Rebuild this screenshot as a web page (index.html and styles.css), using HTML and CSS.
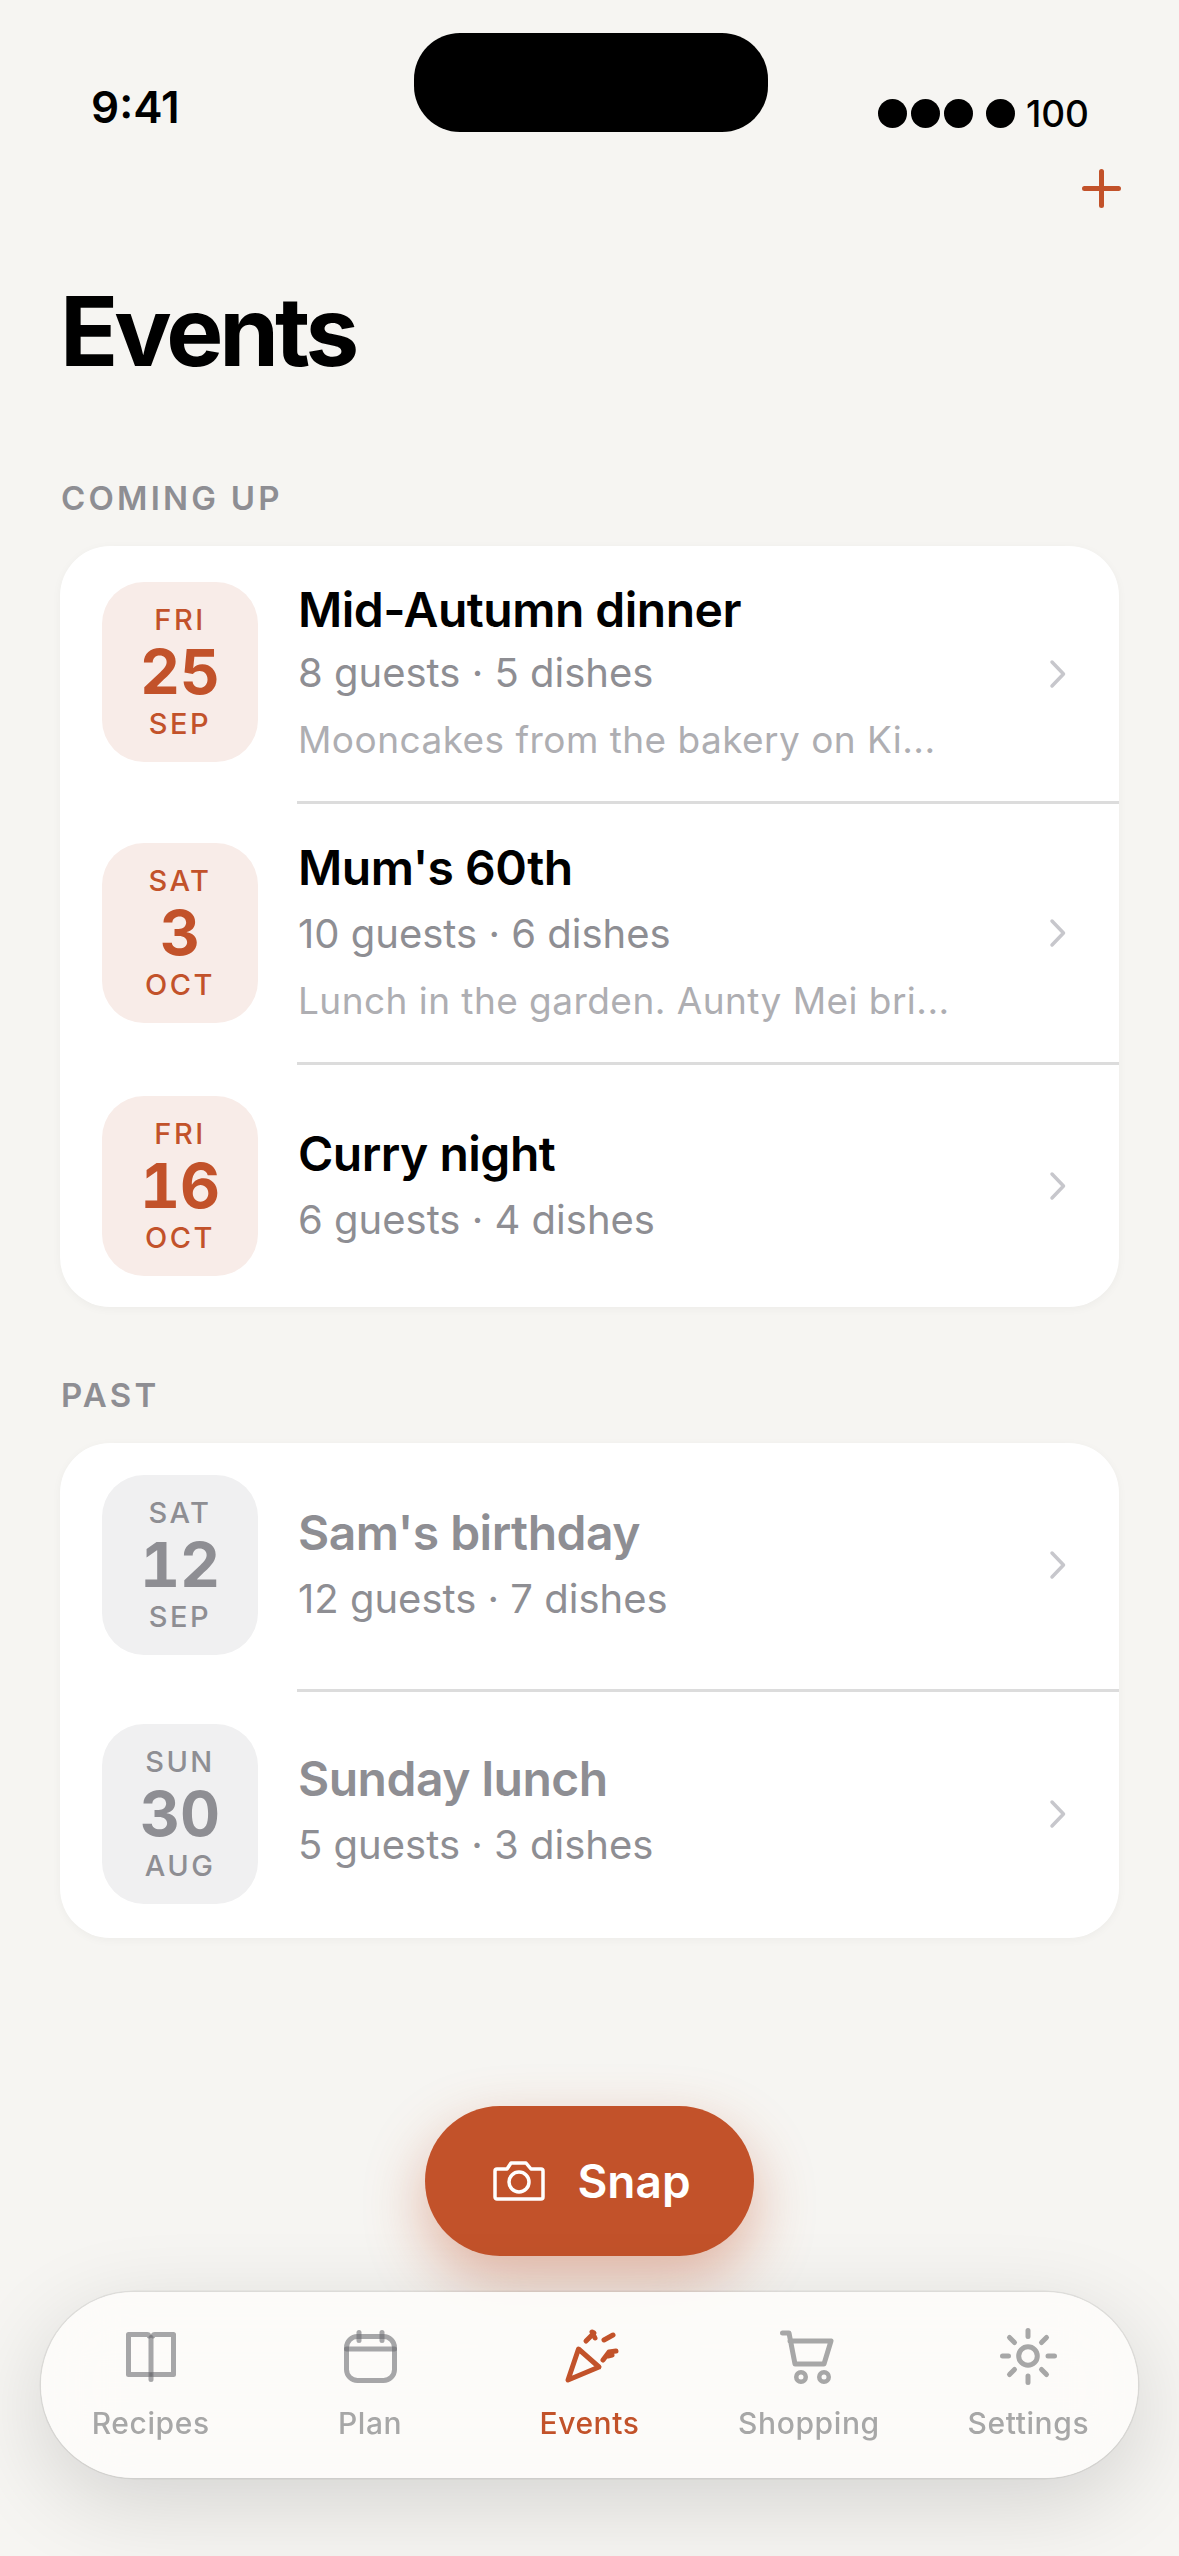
FILE: index.html
```html
<!DOCTYPE html>
<html lang="en">
<head>
  <meta charset="UTF-8">
  <meta name="viewport" content="width=device-width, initial-scale=1.0">
  <title>Events</title>
  <link rel="stylesheet" href="styles.css">
</head>
<body>
  <div class="phone">
    <div class="status-bar">
      <span class="time">9:41</span>
      <div class="island"></div>
      <div class="status-right">
        <span class="dot"></span><span class="dot"></span><span class="dot"></span><span class="dot dot-wifi"></span>
        <span class="battery">100</span>
      </div>
    </div>

    <div class="top-actions">
      <svg class="plus" width="39" height="39" viewBox="0 0 39 39"><path d="M19.5 2.5v34M2.5 19.5h34" fill="none" stroke="#c2522a" stroke-width="5" stroke-linecap="round"/></svg>
    </div>

    <h1 class="page-title">Events</h1>

    <h2 class="section-label">COMING UP</h2>
    <div class="card">
      <div class="row row-tight">
        <div class="date-box">
          <span class="date-dow">FRI</span><span class="date-day">25</span><span class="date-mon">SEP</span>
        </div>
        <div class="row-text">
          <div class="row-title">Mid-Autumn dinner</div>
          <div class="row-meta">8 guests · 5 dishes</div>
          <div class="row-note">Mooncakes from the bakery on Ki...</div>
        </div>
        <svg class="chevron" width="18" height="30" viewBox="0 0 18 30"><path d="M3 3l11.5 12L3 27" fill="none" stroke="#c7c7cc" stroke-width="3.5" stroke-linecap="round" stroke-linejoin="round"/></svg>
      </div>
      <div class="row">
        <div class="date-box">
          <span class="date-dow">SAT</span><span class="date-day">3</span><span class="date-mon">OCT</span>
        </div>
        <div class="row-text">
          <div class="row-title">Mum's 60th</div>
          <div class="row-meta">10 guests · 6 dishes</div>
          <div class="row-note">Lunch in the garden. Aunty Mei bri...</div>
        </div>
        <svg class="chevron" width="18" height="30" viewBox="0 0 18 30"><path d="M3 3l11.5 12L3 27" fill="none" stroke="#c7c7cc" stroke-width="3.5" stroke-linecap="round" stroke-linejoin="round"/></svg>
      </div>
      <div class="row">
        <div class="date-box">
          <span class="date-dow">FRI</span><span class="date-day">16</span><span class="date-mon">OCT</span>
        </div>
        <div class="row-text">
          <div class="row-title">Curry night</div>
          <div class="row-meta">6 guests · 4 dishes</div>
        </div>
        <svg class="chevron" width="18" height="30" viewBox="0 0 18 30"><path d="M3 3l11.5 12L3 27" fill="none" stroke="#c7c7cc" stroke-width="3.5" stroke-linecap="round" stroke-linejoin="round"/></svg>
      </div>
    </div>

    <h2 class="section-label section-past">PAST</h2>
    <div class="card">
      <div class="row row-past">
        <div class="date-box">
          <span class="date-dow">SAT</span><span class="date-day">12</span><span class="date-mon">SEP</span>
        </div>
        <div class="row-text">
          <div class="row-title">Sam's birthday</div>
          <div class="row-meta">12 guests · 7 dishes</div>
        </div>
        <svg class="chevron" width="18" height="30" viewBox="0 0 18 30"><path d="M3 3l11.5 12L3 27" fill="none" stroke="#c7c7cc" stroke-width="3.5" stroke-linecap="round" stroke-linejoin="round"/></svg>
      </div>
      <div class="row row-past">
        <div class="date-box">
          <span class="date-dow">SUN</span><span class="date-day">30</span><span class="date-mon">AUG</span>
        </div>
        <div class="row-text">
          <div class="row-title">Sunday lunch</div>
          <div class="row-meta">5 guests · 3 dishes</div>
        </div>
        <svg class="chevron" width="18" height="30" viewBox="0 0 18 30"><path d="M3 3l11.5 12L3 27" fill="none" stroke="#c7c7cc" stroke-width="3.5" stroke-linecap="round" stroke-linejoin="round"/></svg>
      </div>
    </div>

    <button class="snap">
      <svg width="52" height="40" viewBox="0 0 52 40" fill="none" stroke="#fff" stroke-width="3.5" stroke-linejoin="round"><path d="M4 8h10l4-6h15l5 6h10a2 2 0 0 1 2 2v26a2 2 0 0 1-2 2H4a2 2 0 0 1-2-2V10a2 2 0 0 1 2-2z"/><circle cx="26" cy="21" r="10"/></svg>
      <span>Snap</span>
    </button>

    <nav class="tabbar">
      <div class="tab">
        <svg width="60" height="60" viewBox="0 0 60 60" fill="none" stroke="#6d6d72" stroke-width="5" stroke-opacity=".6" stroke-linecap="round" stroke-linejoin="round"><path d="M28 10a2 2 0 0 0-2-1.5H7.500v40H29"/><path d="M32 10a2 2 0 0 1 2-1.5h18.500v40H31"/><path d="M30 11.500v42"/></svg>
        <span>Recipes</span>
      </div>
      <div class="tab">
        <svg width="60" height="60" viewBox="0 0 60 60" fill="none" stroke="#6d6d72" stroke-width="5" stroke-opacity=".6" stroke-linecap="round" stroke-linejoin="round"><rect x="6.500" y="10.500" width="48" height="44" rx="11"/><path d="M6.500 23h48"/><path d="M19 6.500v8"/><path d="M42 6.500v8"/></svg>
        <span>Plan</span>
      </div>
      <div class="tab tab-active">
        <svg width="60" height="60" viewBox="0 0 60 60" fill="none" stroke="#c2522a" stroke-width="5" stroke-linecap="round" stroke-linejoin="round"><path d="M18.500 23L39 41 8 54z"/><path d="M26 15l8-8"/><path d="M32 6l3 6"/><path d="M44 14l9-5"/><path d="M43 34l6-8 7-1"/><path d="M48 30l4-1"/></svg>
        <span>Events</span>
      </div>
      <div class="tab">
        <svg width="60" height="60" viewBox="0 0 60 60" fill="none" stroke="#a7a7a7" stroke-width="5" stroke-linecap="round" stroke-linejoin="round"><path d="M3.500 7H10l6 31h29l7-23H11"/><circle cx="22" cy="51" r="4.750" stroke-width="4.500"/><circle cx="45" cy="51" r="4.750" stroke-width="4.500"/></svg>
        <span>Shopping</span>
      </div>
      <div class="tab">
        <svg width="60" height="60" viewBox="0 0 60 60" fill="none" stroke="#a7a7a7" stroke-width="5" stroke-linecap="round"><circle cx="30" cy="30" r="9.300"/><path d="M30 4.500v6M30 50v6.500M4.500 30h6M50 30h6.500M11.500 11.500l5 5M43.500 43.500l5 5M11.500 48.500l5-5M43.500 16.500l5-5"/></svg>
        <span>Settings</span>
      </div>
    </nav>
  </div>
</body>
</html>
```
FILE: styles.css
```css
* {
  box-sizing: border-box;
}

body {
  margin: 0;
  background-color: #f6f5f2;
  font-family: Inter, "Noto Sans", sans-serif;
}

.phone {
  position: relative;
  width: 1179px;
  height: 2556px;
  padding: 0 60px;
  overflow: hidden;
}

.status-bar {
  display: flex;
  justify-content: space-between;
  margin: 0 -60px;
  padding: 33px 90px 0 91px;
  height: 132px;
}

.time {
  margin-top: 49px;
  font-size: 44px;
  line-height: 50px;
  font-weight: 600;
  color: #000;
}

.island {
  position: absolute;
  left: 414px;
  top: 33px;
  width: 354px;
  height: 99px;
  border-radius: 46px;
  background-color: #000;
}

.status-right {
  display: flex;
  align-items: center;
  height: 44px;
  margin-top: 58px;
}

.dot {
  width: 29px;
  height: 29px;
  margin-right: 4px;
  border-radius: 50%;
  background-color: #000;
}

.dot-wifi {
  margin-left: 9px;
  margin-right: 11px;
}

.battery {
  font-size: 37px;
  font-weight: 500;
  color: #000;
}

.top-actions {
  display: flex;
  justify-content: flex-end;
  margin-top: 37px;
  margin-right: -2px;
}

.plus {
  display: block;
}

.page-title {
  margin: 65px 0 0 0;
  font-size: 96px;
  line-height: 116px;
  font-weight: 700;
  letter-spacing: -4px;
  color: #000;
}

.section-label {
  margin: 89px 0 0 1px;
  font-size: 33px;
  line-height: 40px;
  font-weight: 600;
  letter-spacing: 3.2px;
  color: #8e8e93;
}

.section-past {
  margin-top: 68px;
}

.card {
  margin-top: 28px;
  background-color: #fff;
  border-radius: 50px;
  box-shadow: 0 2px 10px rgba(0, 0, 0, 0.04);
}

.row {
  display: flex;
  align-items: center;
  position: relative;
  padding: 31px 42px;
}

.row + .row {
  margin-top: 3px;
}

.row + .row::before {
  content: "";
  position: absolute;
  left: 237px;
  right: 0;
  top: -3px;
  height: 3px;
  background-color: #dcdcdc;
}

.date-box {
  flex: none;
  display: flex;
  flex-direction: column;
  align-items: center;
  justify-content: center;
  width: 156px;
  height: 180px;
  border-radius: 42px;
  background-color: #f8ece8;
  color: #c2522a;
}

.date-dow,
.date-mon {
  font-size: 29px;
  line-height: 36px;
  font-weight: 500;
  letter-spacing: 2.5px;
}

.date-day {
  font-size: 62px;
  line-height: 68px;
  font-weight: 700;
  font-variant-numeric: tabular-nums;
}

.row-text {
  flex: 1;
  margin-left: 40px;
  padding: 4px 0 7px;
}

.row-title {
  font-size: 48px;
  line-height: 58px;
  font-weight: 600;
  letter-spacing: -0.5px;
  color: #000;
}

.row-meta {
  margin-top: 13px;
  font-size: 40px;
  line-height: 48px;
  color: #8e8e93;
}

.row-tight .row-meta {
  margin-top: 10px;
}

.row-tight .date-box {
  margin-top: -3px;
}

.row-note {
  margin-top: 20px;
  font-size: 37px;
  line-height: 46px;
  letter-spacing: 0.45px;
  color: #aeaeb2;
}

.chevron {
  flex: none;
  margin-right: 10px;
}

.row-past {
  padding-top: 32px;
  padding-bottom: 34px;
}

.row-past + .row-past .row-text {
  padding-bottom: 13px;
}

.row-past .date-box {
  background-color: #f0f0f1;
  color: #8e8e93;
}

.row-past .row-title {
  color: #8e8e93;
}

.snap {
  position: absolute;
  left: 425px;
  top: 2106px;
  display: flex;
  align-items: center;
  justify-content: center;
  gap: 32px;
  width: 329px;
  height: 150px;
  padding: 0 0 0 5px;
  border: none;
  border-radius: 75px;
  background-color: #c2522a;
  color: #fff;
  font-family: Inter, sans-serif;
  font-size: 46px;
  font-weight: 600;
  box-shadow: 0 24px 60px rgba(194, 82, 42, 0.4);
}

.tabbar {
  position: absolute;
  left: 41px;
  top: 2292px;
  display: flex;
  width: 1097px;
  height: 186px;
  padding-top: 34px;
  border-radius: 93px;
  background-color: rgba(253, 252, 250, 0.9);
  backdrop-filter: blur(40px);
  box-shadow: 0 0 0 1.5px rgba(0, 0, 0, 0.07), 0 24px 90px rgba(0, 0, 0, 0.14);
}

.tab {
  flex: 1;
  display: flex;
  flex-direction: column;
  align-items: center;
  color: #a7a7a7;
  font-size: 30px;
  line-height: 36px;
  font-weight: 500;
  letter-spacing: 0.6px;
}

.tab svg {
  margin-bottom: 19px;
}

.tab-active {
  color: #c2522a;
}
```
